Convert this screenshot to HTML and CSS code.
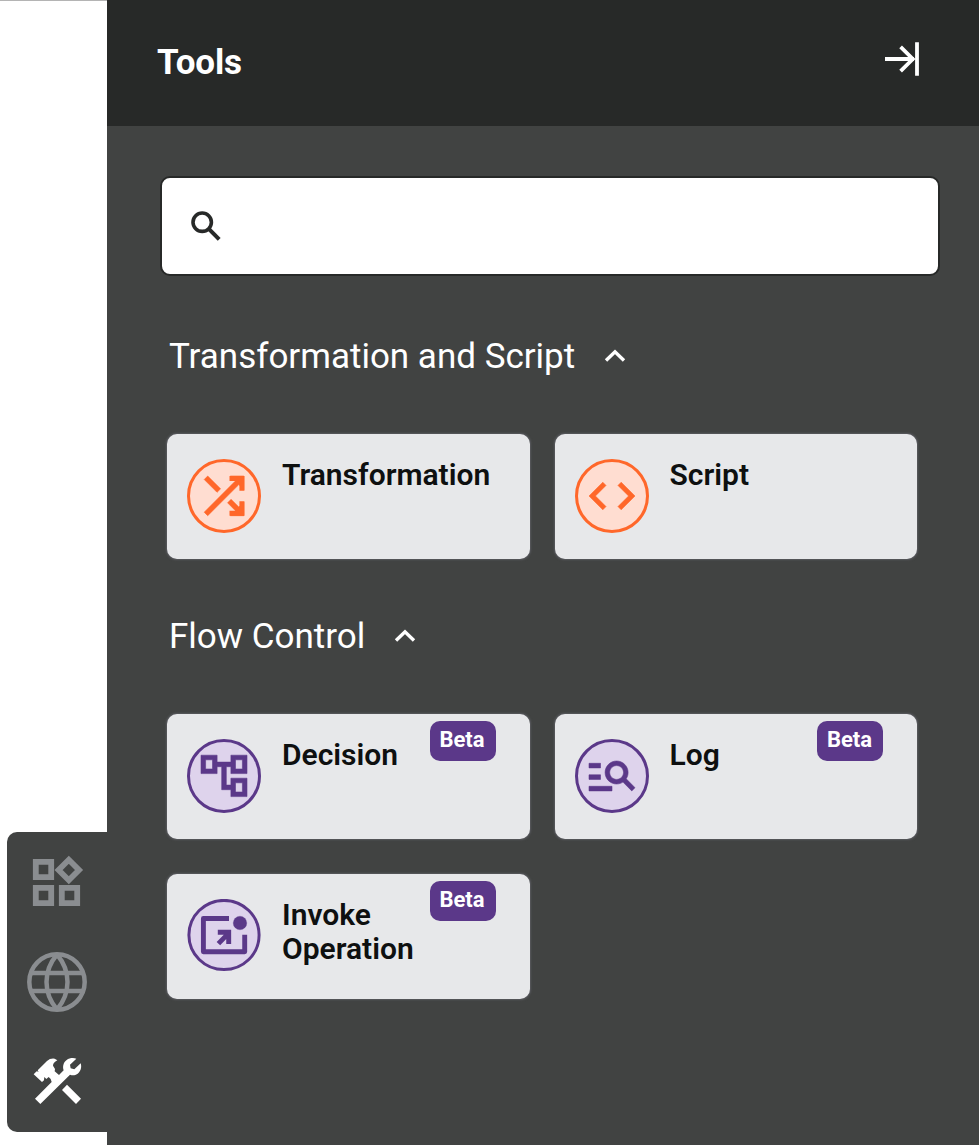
FILE: index.html
```html
<!DOCTYPE html>
<html lang="en">
<head>
  <meta charset="UTF-8">
  <meta name="viewport" content="width=device-width, initial-scale=1.0">
  <title>Tools</title>
  <link rel="stylesheet" href="styles.css">
</head>
<body>
  <!-- Left rail -->
  <div class="rail">
    <nav class="dock">
      <svg class="dock-icon" viewBox="0 0 60 60">
        <g fill="none" stroke="#8a8d90" stroke-width="5.8">
          <path d="M8.8 9.8h15.4v15.4H8.8zM8.8 35.8h15.4v15.4H8.8zM34.8 35.8h15.4v15.4H34.8z"/>
          <path d="M41.8 7.8 52 18 41.8 28.2 31.6 18z"/>
        </g>
      </svg>
      <svg class="dock-icon" viewBox="0 0 60 60">
        <g fill="none" stroke="#8a8d90" stroke-width="4.5">
          <circle cx="30" cy="30" r="27.7"/>
          <path d="M4 21h52M4 39h52"/>
          <path d="M30 2.5C16 19 16 41 30 57.5M30 2.5C44 19 44 41 30 57.5"/>
        </g>
      </svg>
      <svg class="dock-icon" viewBox="21 36 180 180">
        <g fill="#fff">
          <path d="M45 176 95 126 92 117 86 111 79 117 73 111 72 121 66 126 41 103 50 94 56 95 53 91 81 63Q91 54 104 56L112 61Q99 68 99 77L105 87 104 94 117 105 131 91C127 80 130 67 140 60 148 54 160 53 169 56L150 74 152 85 163 88 182 70C186 82 182 95 172 102 165 107 157 107 150 104L61 192Z"/>
          <path d="M126 150 141 134 183 176 168 192Z"/>
        </g>
      </svg>
    </nav>
  </div>

  <!-- Tools panel -->
  <div class="panel">
    <header class="panel-header">
      <h1>Tools</h1>
      <svg class="collapse" viewBox="0 0 36 36">
        <path d="M1 18h29M16.6 5.8 28.8 18 16.6 30.2M33 1.2v33.6" fill="none" stroke="#fff" stroke-width="3.8"/>
      </svg>
    </header>

    <div class="search">
      <svg class="search-icon" viewBox="0 0 32 32">
        <circle cx="12.2" cy="12.2" r="9.2" fill="none" stroke="#272928" stroke-width="3.6"/>
        <path d="m18.8 18.8 10.4 10.6" fill="none" stroke="#272928" stroke-width="4"/>
      </svg>
    </div>

    <section class="group">
      <h2>Transformation and Script
        <svg class="chevron" viewBox="0 0 22 14"><path d="M2 11.5 11 2.8l9 8.7" fill="none" stroke="#fff" stroke-width="3.4"/></svg>
      </h2>
      <div class="cards">
        <div class="card orange">
          <svg class="card-icon" viewBox="0 0 74 74">
            <circle class="disc" cx="37" cy="37" r="35.5"/>
            <path class="glyph" transform="translate(7.3 7.1) scale(2.48)" d="M10.59 9.17 5.41 4 4 5.41l5.17 5.17 1.42-1.41zM14.5 4l2.04 2.04L4 18.59 5.41 20 17.96 7.46 20 9.5V4h-5.5zm.33 9.41-1.41 1.41 3.13 3.13L14.5 20H20v-5.5l-2.04 2.04-3.13-3.13z"/>
            <path class="arrow-tips" d="M42.5 19.5h12.4v12.3M42.5 54.3h12.4V42.2"/>
          </svg>
          <div class="card-title">Transformation</div>
        </div>
        <div class="card orange">
          <svg class="card-icon" viewBox="0 0 74 74">
            <circle class="disc" cx="37" cy="37" r="35.5"/>
            <path class="glyph" transform="translate(9.4 9.4) scale(2.3)" d="M9.4 16.6 4.8 12l4.6-4.6L8 6l-6 6 6 6 1.4-1.4zm5.2 0 4.6-4.6-4.6-4.6L16 6l6 6-6 6-1.4-1.4z"/>
          </svg>
          <div class="card-title">Script</div>
        </div>
      </div>
    </section>

    <section class="group">
      <h2>Flow Control
        <svg class="chevron" viewBox="0 0 22 14"><path d="M2 11.5 11 2.8l9 8.7" fill="none" stroke="#fff" stroke-width="3.4"/></svg>
      </h2>
      <div class="cards">
        <div class="card purple">
          <svg class="card-icon" viewBox="0 0 74 74">
            <circle class="disc" cx="37" cy="37" r="35.5"/>
            <path class="glyph" transform="translate(9.4 9.3) scale(2.3)" d="M22 11V3h-7v3H9V3H2v8h7V8h2v10h4v3h7v-8h-7v3h-2V8h2v3h7zM7 9H4V5h3v4zm10 6h3v4h-3v-4zm0-10h3v4h-3V5z"/>
          </svg>
          <div class="card-title">Decision</div>
          <span class="badge">Beta</span>
        </div>
        <div class="card purple">
          <svg class="card-icon" viewBox="0 0 74 74">
            <circle class="disc" cx="37" cy="37" r="35.5"/>
            <path class="glyph" transform="translate(9.4 8.2) scale(2.3)" d="M7 9H2V7h5v2zm0 3H2v2h5v-2zm13.59 7-3.83-3.83c-.8.52-1.74.83-2.76.83-2.76 0-5-2.24-5-5s2.24-5 5-5 5 2.24 5 5c0 1.02-.31 1.96-.83 2.75L22 17.59 20.59 19zM17 11c0-1.65-1.35-3-3-3s-3 1.35-3 3 1.35 3 3 3 3-1.35 3-3zM2 19h10v-2H2v2z"/>
          </svg>
          <div class="card-title">Log</div>
          <span class="badge">Beta</span>
        </div>
        <div class="card purple">
          <svg class="card-icon" viewBox="0 0 74 74">
            <ellipse class="disc" cx="37" cy="36" rx="35.1" ry="34.6"/>
            <path class="line" stroke-linejoin="round" d="M42 19.5H16.4v33.2h41.3v-17"/>
            <path class="line" d="M30.8 33.3h10.9V45M31.4 44.6l9.8-10"/>
            <circle class="glyph" cx="53" cy="24" r="6.8"/>
          </svg>
          <div class="card-title">Invoke Operation</div>
          <span class="badge">Beta</span>
        </div>
      </div>
    </section>
  </div>
</body>
</html>
```
FILE: styles.css
```css
body {
  margin: 0;
  height: 1145px;
  display: flex;
  font-family: Roboto, "Liberation Sans", sans-serif;
  background-color: #ffffff;
  overflow: hidden;
}
.rail {
  width: 107px;
  box-sizing: border-box;
  border-top: 1px solid #b4b4b4;
  padding: 0 0 13px 7px;
  display: flex;
  align-items: flex-end;
}
.dock {
  width: 100px;
  height: 300px;
  background-color: #414342;
  border-radius: 10px 0 0 10px;
  display: flex;
  flex-direction: column;
  align-items: center;
  justify-content: center;
  gap: 40px;
}
.dock-icon {
  width: 60px;
  height: 60px;
}
.panel {
  flex: 1;
  background-color: #414342;
}
.panel-header {
  height: 126px;
  box-sizing: border-box;
  padding: 0 59px 2px 50px;
  background-color: #272928;
  display: flex;
  align-items: center;
  justify-content: space-between;
}
h1 {
  margin: 0;
  font-size: 35px;
  font-weight: 700;
  letter-spacing: -0.1px;
  color: #ffffff;
}
.collapse {
  width: 36px;
  height: 36px;
  margin-top: -6px;
}
.search {
  height: 100px;
  box-sizing: border-box;
  margin: 50px 39px 0 53px;
  padding: 32px 28px;
  background-color: #ffffff;
  border: 2px solid #272928;
  border-radius: 10px;
}
.search-icon {
  display: block;
  width: 32px;
  height: 32px;
}
.group {
  margin: 56px 62px 0 60px;
}
.search + .group {
  margin-top: 59px;
}
h2 {
  margin: 0 0 55px 2px;
  display: flex;
  align-items: center;
  gap: 29px;
  font-size: 35px;
  line-height: 44px;
  font-weight: 400;
  color: #ffffff;
}
.chevron {
  width: 22px;
  height: 14px;
  margin-top: -2px;
}
.cards {
  display: grid;
  grid-template-columns: 1fr 1fr;
  gap: 35px 25px;
}
.card {
  position: relative;
  height: 125px;
  box-sizing: border-box;
  padding: 24px 20px;
  display: flex;
  gap: 21px;
  background-color: #e7e8ea;
  border-radius: 10px;
  box-shadow: 0 0 2px 1px #5a5b60;
}
.card-icon {
  width: 74px;
  height: 74px;
  margin-top: 1px;
  flex-shrink: 0;
}
.card-title {
  font-size: 30px;
  line-height: 34px;
  font-weight: 600;
  color: #0e1010;
}
.badge {
  position: absolute;
  top: 7px;
  right: 34px;
  width: 66px;
  height: 40px;
  box-sizing: border-box;
  padding-right: 1px;
  border-radius: 10px;
  background-color: #5b3889;
  color: #ffffff;
  font-size: 22px;
  line-height: 37px;
  font-weight: 700;
  text-align: center;
}
.disc {
  stroke-width: 3;
}
.glyph {
  stroke-width: 0.25;
}
.line {
  fill: none;
  stroke-width: 4.9;
}
.arrow-tips {
  fill: none;
  stroke-width: 5;
}
.orange .disc {
  fill: #ffddd1;
  stroke: #ff672a;
}
.orange .glyph {
  fill: #ff672a;
  stroke: #ff672a;
}
.orange .arrow-tips {
  stroke: #ff672a;
}
.purple .disc {
  fill: #ded3ec;
  stroke: #5b3889;
}
.purple .glyph {
  fill: #5b3889;
  stroke: #5b3889;
}
.purple .line {
  stroke: #5b3889;
}
```
